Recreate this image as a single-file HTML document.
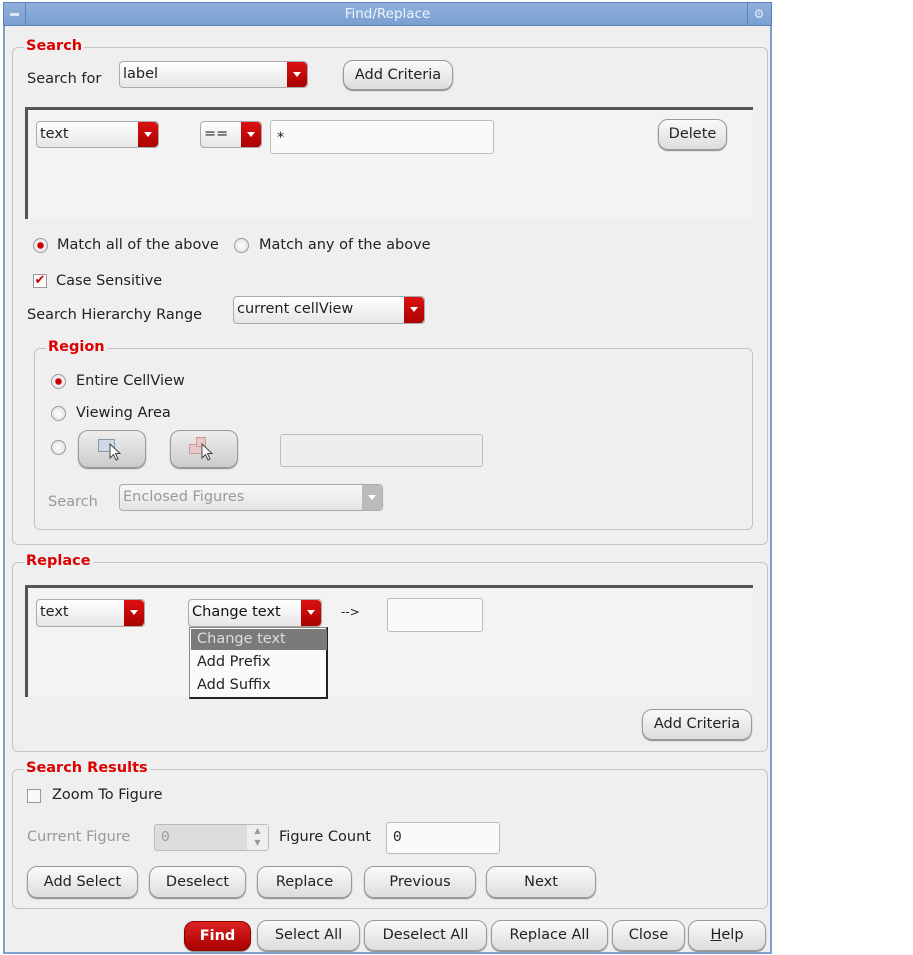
<!DOCTYPE html>
<html><head><meta charset="utf-8"><style>
*{box-sizing:border-box;margin:0;padding:0}
body{width:913px;height:955px;background:#fff;font-family:"DejaVu Sans","Liberation Sans",sans-serif;font-size:14.5px;color:#222;position:relative;overflow:hidden}
.a{position:absolute}
.win{left:3px;top:2px;width:769px;height:952px;background:#efefef;border:2px solid #7f9fcf;border-top:none}
.title{left:3px;top:2px;width:769px;height:24px;background:linear-gradient(#8fb0dc,#7aa0d2);border:1px solid #5d82b8;color:#eef4ff;text-align:center;line-height:22px;font-size:13.5px}
.grp{border:1px solid #c4c4c4;border-radius:6px}
.lbl{font-weight:bold;color:#d00;background:#efefef;padding:0 2px;font-size:14.5px}
.panel{border-top:3px solid #555;border-left:3px solid #555;background:#f3f3f3}
.cb{background:linear-gradient(#fff,#e6e6e6);border:1px solid #aaa;border-radius:4px;padding-left:3px;line-height:24px;overflow:hidden}
.cb i{position:absolute;right:0;top:0;bottom:0;width:20px;background:linear-gradient(#d11,#a00);border-radius:0 4px 4px 0}
.cb i:after{content:"";position:absolute;left:6px;top:10px;border:4px solid transparent;border-top:5px solid #fff}
.btn{background:linear-gradient(#fafafa,#ddd);border:1px solid #999;border-radius:10px;text-align:center;box-shadow:0 1px 1px #888}
.inp{background:#fafafa;border:1px solid #bbb;border-radius:3px}
.rad{width:15px;height:15px;border-radius:50%;border:1px solid #999;background:radial-gradient(#fff,#ddd)}
.rad.on{background:radial-gradient(#c00 30%,#eee 40%)}
.chk{width:14px;height:14px;border:1px solid #999;background:#fafafa}
.g{color:#999}
</style></head><body>
<div class="a win"></div>
<div class="a title">Find/Replace</div>
<div class="a" style="left:4px;top:3px;width:22px;height:22px;border-right:1px solid #5d82b8"><div class="a" style="left:6px;top:10px;width:9px;height:3px;background:#dfe8f6"></div></div>
<div class="a" style="left:747px;top:3px;width:23px;height:22px;border-left:1px solid #5d82b8;color:#dfe8f6;text-align:center;line-height:22px;font-size:12px">⚙</div>

<div class="a grp" style="left:12px;top:47px;width:756px;height:498px"></div>
<div class="a lbl" style="left:24px;top:38px">Search</div>
<div class="a" style="left:27px;top:71px">Search for</div>
<div class="a cb" style="left:119px;top:61px;width:189px;height:27px">label<i></i></div>
<div class="a btn" style="left:343px;top:60px;width:110px;height:30px;line-height:28px">Add Criteria</div>
<div class="a panel" style="left:25px;top:107px;width:728px;height:112px"></div>
<div class="a cb" style="left:36px;top:121px;width:123px;height:27px">text<i></i></div>
<div class="a cb" style="left:200px;top:121px;width:62px;height:27px">==<i></i></div>
<div class="a inp" style="left:270px;top:120px;width:224px;height:34px;padding:9px 6px">*</div>
<div class="a btn" style="left:658px;top:119px;width:69px;height:31px;line-height:29px">Delete</div>
<div class="a rad on" style="left:33px;top:238px"></div>
<div class="a" style="left:57px;top:237px">Match all of the above</div>
<div class="a rad" style="left:234px;top:238px"></div>
<div class="a" style="left:259px;top:237px">Match any of the above</div>
<div class="a chk" style="left:33px;top:274px;color:#c00;font-size:13px;line-height:12px;text-align:center">✔</div>
<div class="a" style="left:56px;top:273px">Case Sensitive</div>
<div class="a" style="left:27px;top:307px">Search Hierarchy Range</div>
<div class="a cb" style="left:233px;top:296px;width:192px;height:28px">current cellView<i></i></div>

<div class="a grp" style="left:34px;top:348px;width:719px;height:182px"></div>
<div class="a lbl" style="left:46px;top:339px">Region</div>
<div class="a rad on" style="left:51px;top:374px"></div>
<div class="a" style="left:76px;top:373px">Entire CellView</div>
<div class="a rad" style="left:51px;top:406px"></div>
<div class="a" style="left:76px;top:405px">Viewing Area</div>
<div class="a rad" style="left:51px;top:440px"></div>
<div class="a btn" style="left:78px;top:430px;width:68px;height:38px;background:linear-gradient(#eee,#ccc)"><div class="a" style="left:19px;top:8px;width:17px;height:13px;border:1px solid #89a;background:#cdd8e8"></div><svg class="a" style="left:30px;top:12px" width="14" height="20"><path d="M1 1 L1 15 L4.5 11.5 L7 17 L9 16 L6.5 10.5 L11 10.5 Z" fill="#fff" stroke="#444" stroke-width="1"/></svg></div>
<div class="a btn" style="left:170px;top:430px;width:68px;height:38px;background:linear-gradient(#eee,#ccc)"><div class="a" style="left:18px;top:13px;width:14px;height:10px;border:1px solid #c99;background:#e8c8c8"></div><div class="a" style="left:25px;top:6px;width:10px;height:10px;border:1px solid #c99;background:#e8c8c8"></div><svg class="a" style="left:30px;top:12px" width="14" height="20"><path d="M1 1 L1 15 L4.5 11.5 L7 17 L9 16 L6.5 10.5 L11 10.5 Z" fill="#fff" stroke="#444" stroke-width="1"/></svg></div>
<div class="a inp" style="left:280px;top:434px;width:203px;height:33px;background:#eee"></div>
<div class="a g" style="left:48px;top:494px">Search</div>
<div class="a cb g" style="left:119px;top:484px;width:264px;height:27px;background:linear-gradient(#f8f8f8,#e4e4e4)">Enclosed Figures<i style="background:#bbb"></i></div>

<div class="a grp" style="left:12px;top:562px;width:756px;height:190px"></div>
<div class="a lbl" style="left:24px;top:553px">Replace</div>
<div class="a panel" style="left:25px;top:585px;width:728px;height:112px"></div>
<div class="a cb" style="left:36px;top:599px;width:109px;height:28px">text<i></i></div>
<div class="a cb" style="left:188px;top:599px;width:134px;height:28px;color:#111">Change text<i></i></div>
<div class="a" style="left:341px;top:605px;font-size:12px">--&gt;</div>
<div class="a inp" style="left:387px;top:598px;width:96px;height:34px"></div>
<div class="a" style="left:189px;top:627px;width:139px;height:72px;background:#fafafa;border:1px solid #888;border-right:2px solid #222;border-bottom:2px solid #222"></div>
<div class="a" style="left:191px;top:629px;width:136px;height:21px;background:#7a7a7a;color:#ddd;padding-left:6px;line-height:21px">Change text</div>
<div class="a" style="left:197px;top:654px">Add Prefix</div>
<div class="a" style="left:197px;top:677px">Add Suffix</div>
<div class="a btn" style="left:642px;top:709px;width:110px;height:31px;line-height:29px">Add Criteria</div>

<div class="a grp" style="left:12px;top:769px;width:756px;height:140px"></div>
<div class="a lbl" style="left:24px;top:760px">Search Results</div>
<div class="a chk" style="left:27px;top:789px"></div>
<div class="a" style="left:52px;top:787px">Zoom To Figure</div>
<div class="a g" style="left:27px;top:829px">Current Figure</div>
<div class="a inp" style="left:154px;top:824px;width:115px;height:27px;background:#ddd;color:#999;padding:5px 6px;font-family:'Liberation Mono',monospace">0</div>
<div class="a" style="left:247px;top:825px;width:21px;height:25px;background:#eee;color:#999;font-size:8px;text-align:center;line-height:12px">▲<br>▼</div>
<div class="a" style="left:279px;top:829px">Figure Count</div>
<div class="a inp" style="left:386px;top:822px;width:114px;height:32px;padding:7px 6px;font-family:'Liberation Mono',monospace">0</div>
<div class="a btn" style="left:27px;top:866px;width:111px;height:32px;line-height:30px">Add Select</div>
<div class="a btn" style="left:149px;top:866px;width:97px;height:32px;line-height:30px">Deselect</div>
<div class="a btn" style="left:257px;top:866px;width:95px;height:32px;line-height:30px">Replace</div>
<div class="a btn" style="left:364px;top:866px;width:112px;height:32px;line-height:30px">Previous</div>
<div class="a btn" style="left:486px;top:866px;width:110px;height:32px;line-height:30px">Next</div>

<div class="a btn" style="left:184px;top:921px;width:67px;height:30px;line-height:28px;background:linear-gradient(#d22,#a00);color:#fff;font-weight:bold;border-color:#800">Find</div>
<div class="a btn" style="left:257px;top:920px;width:103px;height:31px;line-height:29px">Select All</div>
<div class="a btn" style="left:364px;top:920px;width:123px;height:31px;line-height:29px">Deselect All</div>
<div class="a btn" style="left:491px;top:920px;width:117px;height:31px;line-height:29px">Replace All</div>
<div class="a btn" style="left:612px;top:920px;width:73px;height:31px;line-height:29px">Close</div>
<div class="a btn" style="left:688px;top:920px;width:78px;height:31px;line-height:29px"><u>H</u>elp</div>
</body></html>
